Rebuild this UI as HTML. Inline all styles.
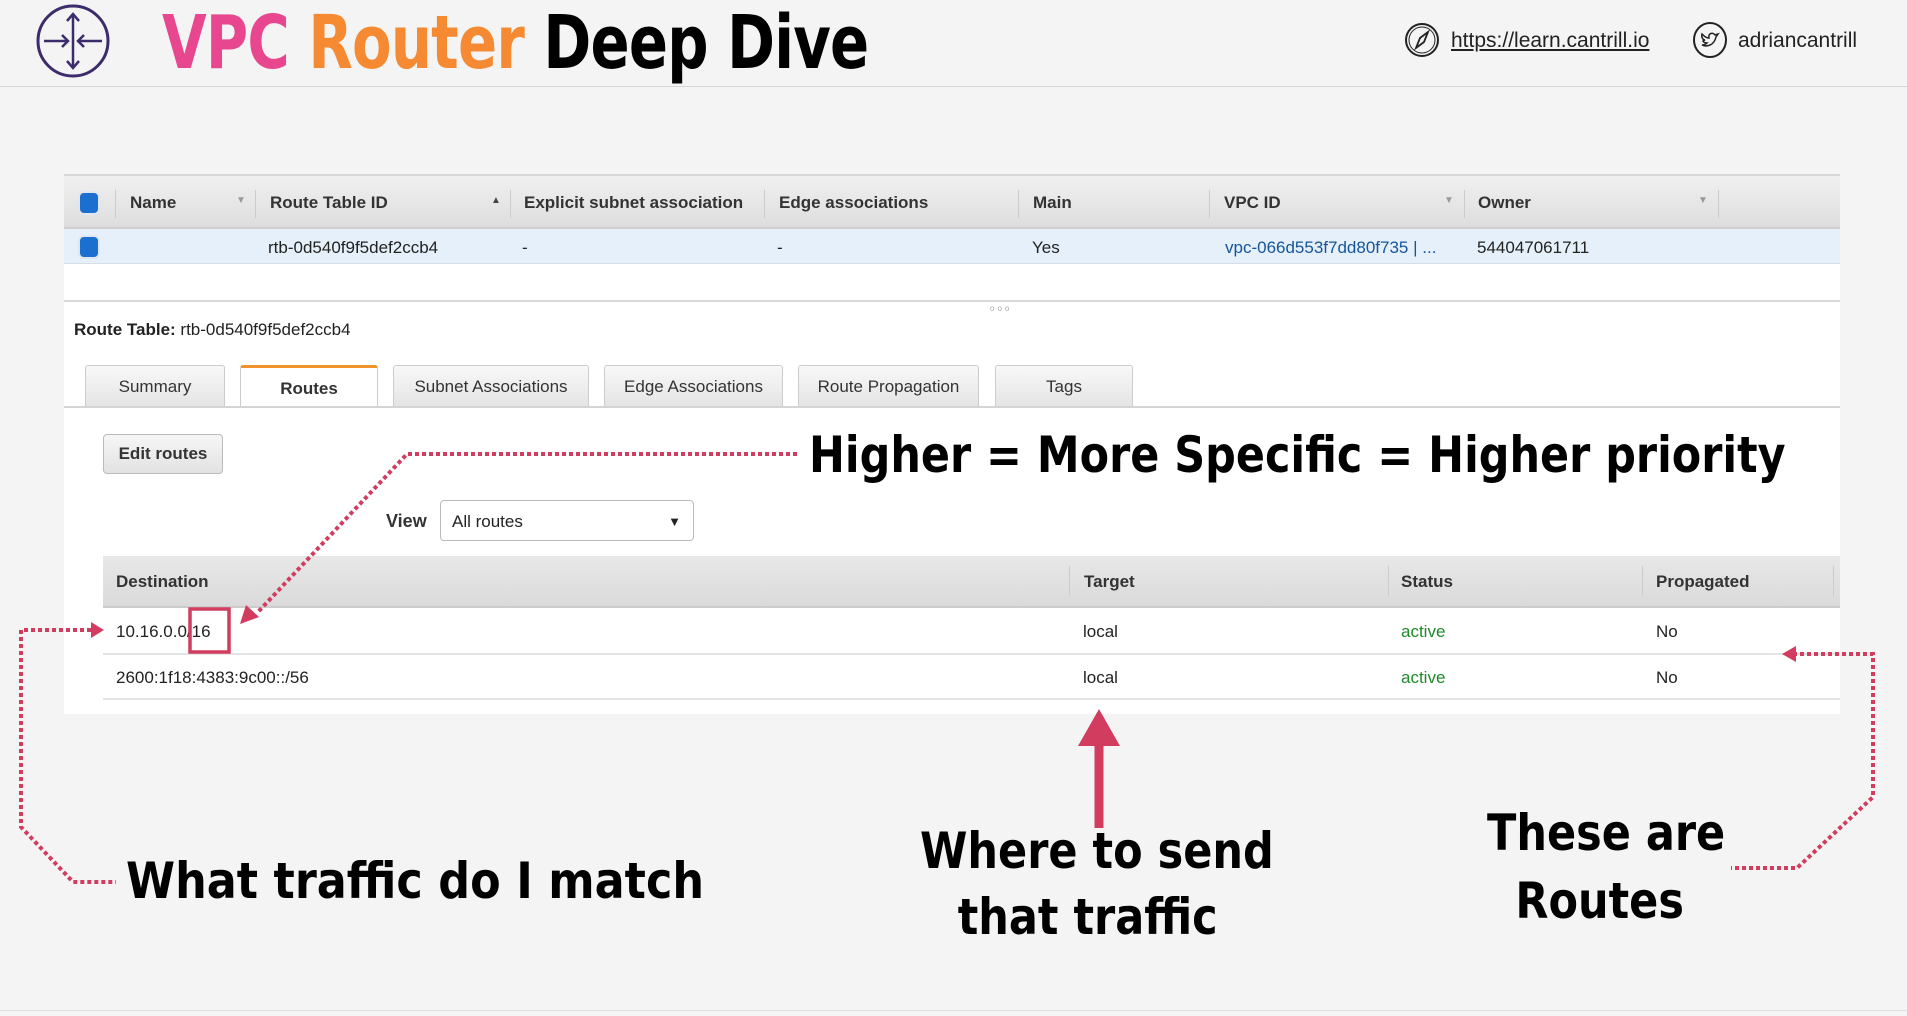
<!DOCTYPE html>
<html><head><meta charset="utf-8"><style>
*{margin:0;padding:0;box-sizing:border-box}
body{width:1907px;height:1016px;background:#f4f4f4;position:relative;overflow:hidden;font-family:"Liberation Sans",Arial,sans-serif;color:#222}
.a{position:absolute}
.title{left:162px;top:0px;font-size:74px;font-weight:bold;font-family:"DejaVu Sans","Liberation Sans",sans-serif;white-space:nowrap;transform:scaleX(0.78);transform-origin:left top;letter-spacing:-1px}
.ann{position:absolute;font-family:"DejaVu Sans","Liberation Sans",sans-serif;font-weight:bold;color:#000;white-space:nowrap;font-size:50px;transform-origin:left top}
.panel{left:64px;top:174px;width:1776px;height:540px;background:#fff}
.th{font-weight:bold;font-size:17px;color:#333}
.tab{position:absolute;top:365px;height:42px;background:linear-gradient(#f8f8f8,#e4e4e4);border:1px solid #ccc;border-bottom:none;font-size:17px;text-align:center;line-height:42px;color:#333;border-radius:3px 3px 0 0}
.sep{position:absolute;width:1px;background:#ccc}
.cell{position:absolute;font-size:17px;color:#222}
</style></head><body>
<svg class="a" style="left:34px;top:2px" width="78" height="78" viewBox="0 0 78 78">
<circle cx="39" cy="39" r="35" fill="none" stroke="#3d2c6b" stroke-width="3"/>
<g stroke="#3d2c6b" stroke-width="2.5" fill="none">
<line x1="39" y1="12" x2="39" y2="66"/><polyline points="33,19 39,12 45,19"/><polyline points="33,59 39,66 45,59"/>
<line x1="10" y1="39" x2="34" y2="39"/><polyline points="28,33 34,39 28,45"/>
<line x1="68" y1="39" x2="44" y2="39"/><polyline points="50,33 44,39 50,45"/>
</g></svg>
<div class="a title"><span style="color:#e8468f">VPC</span> <span style="color:#f58a33">Router</span> <span style="color:#000">Deep Dive</span></div>
<svg class="a" style="left:1404px;top:22px" width="36" height="36" viewBox="0 0 36 36"><circle cx="18" cy="18" r="16" fill="none" stroke="#222" stroke-width="2"/><circle cx="18" cy="18" r="13" fill="none" stroke="#222" stroke-width="1"/><path d="M24 10 L20 20 L12 26 L16 16 Z" fill="none" stroke="#222" stroke-width="1.8"/></svg>
<div class="a" style="left:1451px;top:29px;font-size:21px;text-decoration:underline;color:#222">https://learn.cantrill.io</div>
<svg class="a" style="left:1692px;top:22px" width="36" height="36" viewBox="0 0 36 36"><ellipse cx="18" cy="18" rx="16" ry="17" fill="none" stroke="#222" stroke-width="2"/><path d="M10 23 C14 25 22 24 24 15 L26 12 L23 13 C21 10 16 11 17 16 C14 16 12 14 10 12 C9 15 11 18 13 18 L11 19 C12 21 14 21 15 21 C14 22 12 23 10 23Z" fill="none" stroke="#222" stroke-width="1.5"/></svg>
<div class="a" style="left:1738px;top:29px;font-size:21px;color:#222">adriancantrill</div>
<div class="a" style="left:0;top:86px;width:1907px;height:1px;background:#d6d6d6"></div>
<div class="a" style="left:0;top:1010px;width:1907px;height:1px;background:#e0e0e0"></div>

<div class="a panel"></div>
<div class="a" style="left:64px;top:174px;width:1776px;height:55px;background:linear-gradient(#f0f0f0,#dedede);border-top:2px solid #d8d8d8;border-bottom:2px solid #d0d0d0"></div>
<div class="a" style="left:64px;top:229px;width:1776px;height:35px;background:#e6f0fa;border-bottom:1px solid #d6dde6"></div>
<div class="a" style="left:80px;top:193px;width:18px;height:20px;background:#1a6fcf;border-radius:4px;box-shadow:0 0 0 2px #dfe6ee"></div>
<div class="a" style="left:80px;top:237px;width:18px;height:20px;background:#1a6fcf;border-radius:4px;box-shadow:0 0 0 2px #dfe6ee"></div>
<div class="sep" style="left:115px;top:190px;height:28px"></div>
<div class="sep" style="left:255px;top:190px;height:28px"></div>
<div class="sep" style="left:510px;top:190px;height:28px"></div>
<div class="sep" style="left:764px;top:190px;height:28px"></div>
<div class="sep" style="left:1018px;top:190px;height:28px"></div>
<div class="sep" style="left:1209px;top:190px;height:28px"></div>
<div class="sep" style="left:1464px;top:190px;height:28px"></div>
<div class="sep" style="left:1718px;top:190px;height:28px"></div>
<div class="a th" style="left:130px;top:193px">Name</div>
<div class="a" style="left:236px;top:195px;font-size:10px;color:#999">▼</div>
<div class="a th" style="left:270px;top:193px">Route Table ID</div>
<div class="a" style="left:491px;top:195px;font-size:10px;color:#444">▲</div>
<div class="a th" style="left:524px;top:193px;width:228px;overflow:hidden;white-space:nowrap">Explicit subnet association</div>
<div class="a th" style="left:779px;top:193px">Edge associations</div>
<div class="a th" style="left:1033px;top:193px">Main</div>
<div class="a th" style="left:1224px;top:193px">VPC ID</div>
<div class="a" style="left:1444px;top:195px;font-size:10px;color:#999">▼</div>
<div class="a th" style="left:1478px;top:193px">Owner</div>
<div class="a" style="left:1698px;top:195px;font-size:10px;color:#999">▼</div>
<div class="cell" style="left:268px;top:238px">rtb-0d540f9f5def2ccb4</div>
<div class="cell" style="left:522px;top:238px">-</div>
<div class="cell" style="left:777px;top:238px">-</div>
<div class="cell" style="left:1032px;top:238px">Yes</div>
<div class="cell" style="left:1225px;top:238px;color:#14559c">vpc-066d553f7dd80f735 | ...</div>
<div class="cell" style="left:1477px;top:238px">544047061711</div>
<div class="a" style="left:64px;top:300px;width:1776px;height:2px;background:#d8d8d8"></div>
<div class="a" style="left:990px;top:304px;font-size:8px;color:#aaa;letter-spacing:3px">ooo</div>
<div class="cell" style="left:74px;top:320px"><b>Route Table:</b> rtb-0d540f9f5def2ccb4</div>
<div class="tab" style="left:85px;width:140px">Summary</div>
<div class="tab" style="left:240px;width:138px;background:#fff;border-top:3px solid #f0932b;font-weight:bold;height:43px">Routes</div>
<div class="tab" style="left:393px;width:196px">Subnet Associations</div>
<div class="tab" style="left:604px;width:179px">Edge Associations</div>
<div class="tab" style="left:798px;width:181px">Route Propagation</div>
<div class="tab" style="left:995px;width:138px">Tags</div>
<div class="a" style="left:64px;top:406px;width:1776px;height:2px;background:#d4d4d4"></div>
<div class="a" style="left:103px;top:434px;width:120px;height:40px;border:1px solid #bbb;border-radius:4px;background:linear-gradient(#f6f6f6,#e2e2e2);font-weight:bold;font-size:17px;text-align:center;line-height:38px;color:#333">Edit routes</div>
<div class="a th" style="left:386px;top:511px;font-size:18px">View</div>
<div class="a" style="left:440px;top:500px;width:254px;height:41px;border:1px solid #bbb;border-radius:4px;background:#fff;font-size:17px;line-height:41px;padding-left:11px">All routes<span style="position:absolute;right:12px;top:0;font-size:13px">▼</span></div>
<div class="a" style="left:103px;top:556px;width:1737px;height:52px;background:linear-gradient(#e8e8e8,#dadada);border-bottom:2px solid #ccc"></div>
<div class="sep" style="left:1069px;top:566px;height:30px"></div>
<div class="sep" style="left:1388px;top:566px;height:30px"></div>
<div class="sep" style="left:1642px;top:566px;height:30px"></div>
<div class="sep" style="left:1833px;top:566px;height:30px"></div>
<div class="a th" style="left:116px;top:572px">Destination</div>
<div class="a th" style="left:1084px;top:572px">Target</div>
<div class="a th" style="left:1401px;top:572px">Status</div>
<div class="a th" style="left:1656px;top:572px">Propagated</div>
<div class="a" style="left:103px;top:653px;width:1737px;height:2px;background:#e4e4e4"></div>
<div class="a" style="left:103px;top:698px;width:1737px;height:2px;background:#e4e4e4"></div>
<div class="cell" style="left:116px;top:622px">10.16.0.0/16</div>
<div class="cell" style="left:1083px;top:622px">local</div>
<div class="cell" style="left:1401px;top:622px;color:#1d8a2a">active</div>
<div class="cell" style="left:1656px;top:622px">No</div>
<div class="cell" style="left:116px;top:668px">2600:1f18:4383:9c00::/56</div>
<div class="cell" style="left:1083px;top:668px">local</div>
<div class="cell" style="left:1401px;top:668px;color:#1d8a2a">active</div>
<div class="cell" style="left:1656px;top:668px">No</div>
<svg class="a" style="left:0;top:0" width="1907" height="1016">
<g fill="none" stroke="#d23c5f" stroke-width="4" stroke-dasharray="4 3">
<polyline points="797,454 407,454 258,612"/>
<polyline points="98,630 21,630 21,827 73,882 116,882"/>
<polyline points="1793,654 1873,654 1873,797 1797,868 1731,868"/>
</g>
<polygon points="240,624 246,605 259,617" fill="#d23c5f"/>
<polygon points="104,630 91,622 91,638" fill="#d23c5f"/>
<polygon points="1782,654 1796,646 1796,662" fill="#d23c5f"/>
<rect x="190" y="609" width="39" height="43" fill="none" stroke="#d23c5f" stroke-width="3.5"/>
<line x1="1099" y1="828" x2="1099" y2="742" stroke="#d23c5f" stroke-width="9"/>
<polygon points="1099,709 1078,746 1120,746" fill="#d23c5f"/>
</svg>
<div class="ann" style="left:809px;top:426px;transform:scaleX(0.858)">Higher = More Specific = Higher priority</div>
<div class="ann" style="left:126px;top:852px;transform:scaleX(0.89)">What traffic do I match</div>
<div class="ann" style="left:920px;top:818px;width:390px;text-align:center;line-height:66px;transform:scaleX(0.86)">Where to send<br>that traffic</div>
<div class="ann" style="left:1487px;top:799px;width:262px;text-align:center;line-height:68px;transform:scaleX(0.86)">These are<br>Routes</div>
</body></html>
